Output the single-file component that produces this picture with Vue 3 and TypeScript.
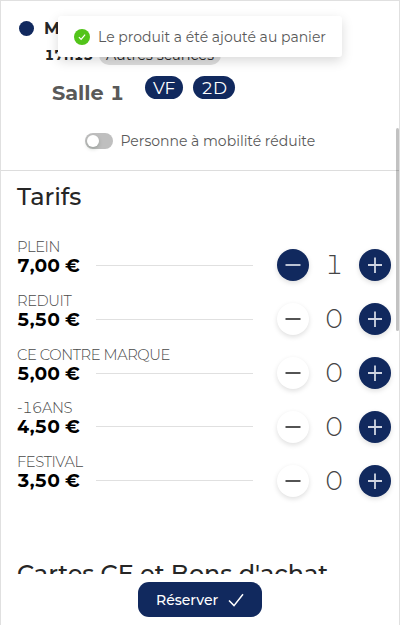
<script setup lang="ts">
import { ref } from 'vue'

interface Tarif {
  label: string
  price: string
  qty: number
}

const tarifs = ref<Tarif[]>([
  { label: 'PLEIN', price: '7,00 €', qty: 1 },
  { label: 'REDUIT', price: '5,50 €', qty: 0 },
  { label: 'CE CONTRE MARQUE', price: '5,00 €', qty: 0 },
  { label: '-16ANS', price: '4,50 €', qty: 0 },
  { label: 'FESTIVAL', price: '3,50 €', qty: 0 },
])
</script>

<template>
  <div class="frame">
    <div class="scroll">
      <header class="session">
        <div class="date"><span class="dot"></span><b>Mercredi</b></div>
        <div class="time"><b>17h15</b><span class="others">Autres séances</span></div>
        <div class="room">
          <h2>Salle 1</h2>
          <span class="pill">VF</span>
          <span class="pill dim">2D</span>
        </div>
        <label class="pmr"><span class="switch"><i></i></span><span class="pmr-text">Personne à mobilité réduite</span></label>
      </header>
      <section class="tarifs">
        <h3 class="title-tarifs">Tarifs</h3>
        <div v-for="t in tarifs" :key="t.label" class="row">
          <div class="info">
            <div class="label">{{ t.label }}</div>
            <div class="price-line"><b class="price">{{ t.price }}</b><span class="rule"></span></div>
          </div>
          <button class="round" :class="{ off: t.qty === 0 }" @click="t.qty = Math.max(0, t.qty - 1)">
            <svg width="32" height="32" viewBox="0 0 32 32"><path d="M8.5 16H23.5" /></svg>
          </button>
          <span class="qty">{{ t.qty }}</span>
          <button class="round" @click="t.qty++">
            <svg width="32" height="32" viewBox="0 0 32 32"><path d="M9 16H23M16 8.5V24" /></svg>
          </button>
        </div>
        <h3 class="title-cartes">Cartes CE et Bons d'achat</h3>
      </section>
    </div>
    <footer class="bar">
      <button class="book">
        <span>Réserver</span>
        <svg width="16" height="14" viewBox="0 0 16 14"><path d="M1 7.5L6 12.6L15 1.2" /></svg>
      </button>
    </footer>
    <div class="thumb"></div>
    <div class="toast">
      <svg width="16" height="16" viewBox="0 0 16 16"><circle cx="8" cy="8" r="8" /><path d="M4.9 8.2L7.1 10.4L11.1 5.6" /></svg>
      <span>Le produit a été ajouté au panier</span>
    </div>
  </div>
</template>

<style>
body {
  margin: 0;
  background: #fff;
}
</style>

<style scoped>
* {
  box-sizing: border-box;
}
.frame {
  position: relative;
  width: 400px;
  height: 625px;
  overflow: hidden;
  display: flex;
  flex-direction: column;
  border: 1px solid #e0e0e0;
  border-bottom: 0;
  font-family: Montserrat, Inter, "Liberation Sans", sans-serif;
  font-size: 14px;
  font-variant-numeric: tabular-nums;
  color: #595959;
}
.scroll {
  height: 573px;
  overflow: hidden;
}
.session {
  height: 170px;
  padding-top: 15px;
  border-bottom: 1px solid #ddd;
}
.date {
  display: flex;
  align-items: center;
  gap: 10px;
  height: 24px;
  margin-left: 18px;
  font-size: 16.5px;
  line-height: 22px;
  color: #262626;
}
.dot {
  width: 15px;
  height: 15px;
  border-radius: 50%;
  background: #11295e;
}
.time {
  display: flex;
  align-items: center;
  height: 20px;
  margin: 5px 0 0 44px;
  color: #262626;
}
.time b {
  width: 54px;
  margin-left: -0.5px;
  margin-right: 0.5px;
}
.others {
  width: 122px;
  height: 20px;
  line-height: 20px;
  border-radius: 10px;
  text-align: center;
  background: #ddd;
  font-size: 14.4px;
}
.room {
  display: flex;
  height: 36px;
  margin: 11px 0 0 51px;
}
h2 {
  width: 93px;
  margin: 3px 0 0;
  font-size: 20.8px;
  line-height: 27px;
  font-weight: 700;
  white-space: nowrap;
}
.pill {
  width: 38px;
  height: 23px;
  line-height: 24px;
  border-radius: 12px;
  text-align: center;
  background: #11295e;
  color: #fff;
  font-size: 17px;
  letter-spacing: -0.3px;
}
.dim {
  width: 42px;
  margin-left: 10px;
}
.pmr {
  display: flex;
  align-items: center;
  height: 20px;
  margin: 19px 0 0 84px;
}
.switch {
  width: 28px;
  height: 16px;
  margin-right: 7.5px;
  padding: 2px;
  border-radius: 8px;
  background: #bfbfbf;
}
.switch i {
  display: block;
  width: 12px;
  height: 12px;
  border-radius: 50%;
  background: #fff;
  box-shadow: 0 2px 4px rgba(0, 35, 11, 0.2);
}
.pmr-text {
  white-space: nowrap;
}
.tarifs {
  padding: 10px 8px 0 16px;
}
h3 {
  margin: 0;
  height: 32px;
  line-height: 32px;
  font-size: 24px;
  font-weight: 500;
  letter-spacing: -0.08px;
  color: #262626;
  white-space: nowrap;
}
.title-tarifs {
  margin-bottom: 25px;
}
.title-cartes {
  margin-top: 50.75px;
}
.row {
  display: flex;
  height: 53.85px;
}
.info {
  width: 236px;
  margin-top: -0.1px;
  margin-right: 24px;
}
.label {
  height: 17px;
  line-height: 19px;
  font-size: 14.7px;
  font-weight: 300;
  letter-spacing: -0.4px;
  color: #4a4a4a;
  white-space: nowrap;
}
.price-line {
  display: flex;
  align-items: center;
  height: 22px;
}
.price {
  width: 79px;
  color: #000;
  font-size: 18.2px;
  line-height: 22px;
  white-space: nowrap;
}
.rule {
  flex: 1;
  height: 1px;
  margin-bottom: 1px;
  background: #e0e0e0;
}
.round {
  width: 32px;
  height: 32px;
  margin-top: 11.3px;
  padding: 0;
  border: 0;
  border-radius: 50%;
  background: #11295e;
  box-shadow: 0 2px 5px rgba(0, 0, 0, 0.13);
}
.round svg {
  display: block;
  fill: none;
  stroke: #d0d5e2;
  stroke-width: 1.8;
}
.round.off {
  background: #fff;
}
.off svg {
  stroke: #404040;
}
.qty {
  width: 50px;
  height: 32px;
  margin-top: 11.3px;
  line-height: 33px;
  text-align: center;
  font-weight: 300;
  font-size: 26px;
  color: #454545;
}
.bar {
  display: flex;
  justify-content: center;
  padding-top: 8px;
  background: #fff;
}
.book {
  display: flex;
  align-items: center;
  width: 124px;
  height: 35px;
  padding: 0 0 0 18px;
  border: 0;
  border-radius: 11px;
  background: #11295e;
  color: #fff;
  font: inherit;
  font-weight: 500;
}
.book span {
  width: 72px;
  text-align: left;
}
.book svg {
  fill: none;
  stroke: #fff;
  stroke-width: 1.5;
}
.thumb {
  position: absolute;
  top: 127px;
  right: 0;
  width: 3px;
  height: 203px;
  border-radius: 2px;
  background: rgba(0, 0, 0, 0.24);
}
.toast {
  position: absolute;
  top: 15px;
  left: 57px;
  display: flex;
  align-items: center;
  width: 284px;
  height: 41px;
  padding-left: 16px;
  border-radius: 3px;
  background: #fff;
  box-shadow: 0 4px 12px rgba(0, 0, 0, 0.15);
  white-space: nowrap;
}
.toast svg {
  margin-right: 8px;
  fill: #52c41a;
}
.toast path {
  fill: none;
  stroke: #fff;
  stroke-width: 1.2;
}
</style>
